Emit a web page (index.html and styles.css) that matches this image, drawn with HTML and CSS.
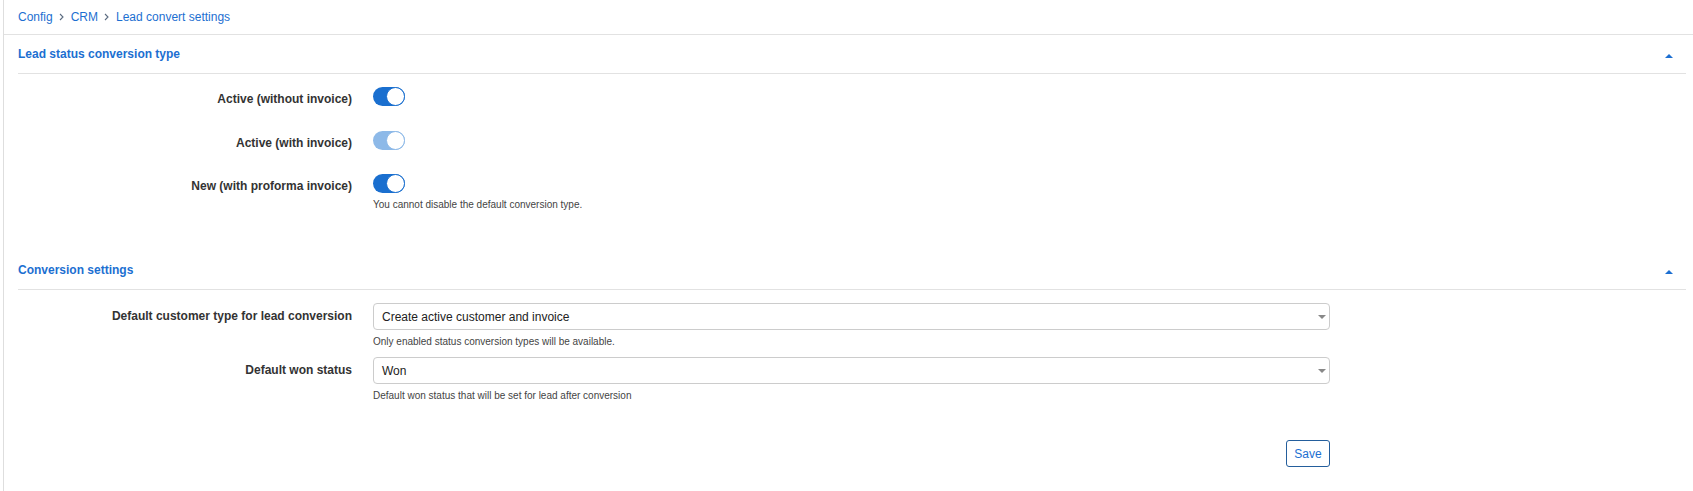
FILE: index.html
```html
<!DOCTYPE html>
<html lang="en">
<head>
<meta charset="utf-8">
<title>Lead convert settings</title>
<link rel="stylesheet" href="styles.css">
</head>
<body>
<div class="page">
  <nav class="breadcrumb">
    <a href="#" class="crumb">Config</a>
    <svg class="sep" width="5" height="8" viewBox="0 0 5 8"><path d="M1 1 L4 4 L1 7" fill="none" stroke="#5b6b80" stroke-width="1.1"/></svg>
    <a href="#" class="crumb">CRM</a>
    <svg class="sep" width="5" height="8" viewBox="0 0 5 8"><path d="M1 1 L4 4 L1 7" fill="none" stroke="#5b6b80" stroke-width="1.1"/></svg>
    <span class="crumb">Lead convert settings</span>
  </nav>

  <div class="content">
    <section class="card card-first">
      <header class="card-head">
        <h2 class="card-title">Lead status conversion type</h2>
        <svg class="collapse" width="8" height="4" viewBox="0 0 8 4"><path d="M0 4 L4 0 L8 4 Z" fill="#1c6fd1"/></svg>
      </header>
      <div class="card-body">
        <div class="row toggle-row">
          <label class="row-label">Active (without invoice)</label>
          <div class="row-control">
            <span class="switch on"><span class="knob"></span></span>
          </div>
        </div>
        <div class="row toggle-row">
          <label class="row-label">Active (with invoice)</label>
          <div class="row-control">
            <span class="switch on disabled"><span class="knob"></span></span>
          </div>
        </div>
        <div class="row toggle-row last">
          <label class="row-label">New (with proforma invoice)</label>
          <div class="row-control">
            <span class="switch on"><span class="knob"></span></span>
            <p class="help toggle-help">You cannot disable the default conversion type.</p>
          </div>
        </div>
      </div>
    </section>

    <section class="card">
      <header class="card-head">
        <h2 class="card-title">Conversion settings</h2>
        <svg class="collapse" width="8" height="4" viewBox="0 0 8 4"><path d="M0 4 L4 0 L8 4 Z" fill="#1c6fd1"/></svg>
      </header>
      <div class="card-body">
        <div class="row select-row">
          <label class="row-label sel-label">Default customer type for lead conversion</label>
          <div class="row-control">
            <div class="select">
              <span class="select-value">Create active customer and invoice</span>
              <svg class="select-caret" width="8" height="4" viewBox="0 0 8 4"><path d="M0 0 L8 0 L4 4 Z" fill="#888"/></svg>
            </div>
            <p class="help">Only enabled status conversion types will be available.</p>
          </div>
        </div>
        <div class="row select-row">
          <label class="row-label sel-label">Default won status</label>
          <div class="row-control">
            <div class="select">
              <span class="select-value">Won</span>
              <svg class="select-caret" width="8" height="4" viewBox="0 0 8 4"><path d="M0 0 L8 0 L4 4 Z" fill="#888"/></svg>
            </div>
            <p class="help">Default won status that will be set for lead after conversion</p>
          </div>
        </div>
        <div class="row actions">
          <div></div>
          <div class="row-control action-cell">
            <button class="btn-save" type="button">Save</button>
          </div>
        </div>
      </div>
    </section>
  </div>
</div>
</body>
</html>
```

FILE: styles.css
```css
* { box-sizing: border-box; }

html, body {
  margin: 0;
  padding: 0;
  background: #fff;
}

body {
  font-family: "Liberation Sans", Arial, sans-serif;
  font-size: 12px;
  color: #333;
}

.page {
  margin-left: 3px;
  border-left: 1px solid #dedede;
  min-height: 491px;
}

.breadcrumb {
  display: flex;
  align-items: center;
  height: 35px;
  line-height: 34px;
  padding-left: 14px;
  border-bottom: 1px solid #e2e2e2;
}

.crumb {
  color: #1c6fd1;
  text-decoration: none;
}

.sep {
  margin: 0 7px 0 6px;
}

.content {
  padding: 0 7px 0 14px;
}

.card-head {
  display: flex;
  align-items: center;
  justify-content: space-between;
  height: 39px;
  border-bottom: 1px solid #e2e2e2;
}

.card-title {
  margin: 0;
  font-size: 12px;
  font-weight: bold;
  color: #1c6fd1;
  line-height: 38px;
}

.collapse {
  margin-right: 13px;
  margin-top: 3px;
}

.card-body {
  padding-top: 13px;
}

.card-first .card-body {
  padding-bottom: 39px;
}

.row {
  display: grid;
  grid-template-columns: 334px 957px;
  column-gap: 21px;
  align-items: start;
}

.row-label {
  text-align: right;
  font-weight: bold;
  color: #333;
}

.toggle-row {
  height: 19px;
  margin-bottom: 24.5px;
}

.toggle-row .row-label {
  padding-top: 5px;
  line-height: 14px;
}

.toggle-row.last {
  height: auto;
  margin-bottom: 0;
}

.switch {
  display: flex;
  justify-content: flex-end;
  width: 32px;
  height: 19px;
  border-radius: 10px;
  background: #1a6fcf;
}

.switch .knob {
  width: 19px;
  height: 19px;
  border-radius: 50%;
  background: #fff;
  border: 1.5px solid #1a6fcf;
}

.switch.disabled {
  background: #8db9e8;
}

.switch.disabled .knob {
  border-color: #8db9e8;
}

.help {
  margin: 5px 0 0;
  font-size: 10px;
  line-height: 14px;
  color: #444;
}

.select-row {
  margin-bottom: 8px;
}

.sel-label {
  padding-top: 4px;
  line-height: 19px;
}

.select {
  display: flex;
  align-items: center;
  justify-content: space-between;
  height: 27px;
  border: 1px solid #cccccc;
  border-radius: 4px;
  padding: 0 3px 0 8px;
  background: #fff;
}

.select-value {
  font-size: 12px;
  color: #222;
  line-height: 25px;
  padding-top: 1px;
}

.actions {
  margin-top: 37px;
}

.action-cell {
  display: flex;
  justify-content: flex-end;
}

.btn-save {
  width: 44px;
  height: 27px;
  padding: 0;
  border: 1px solid #245e9c;
  border-radius: 3px;
  background: #fff;
  color: #1c6fd1;
  font-family: "Liberation Sans", Arial, sans-serif;
  font-size: 12px;
}
```
